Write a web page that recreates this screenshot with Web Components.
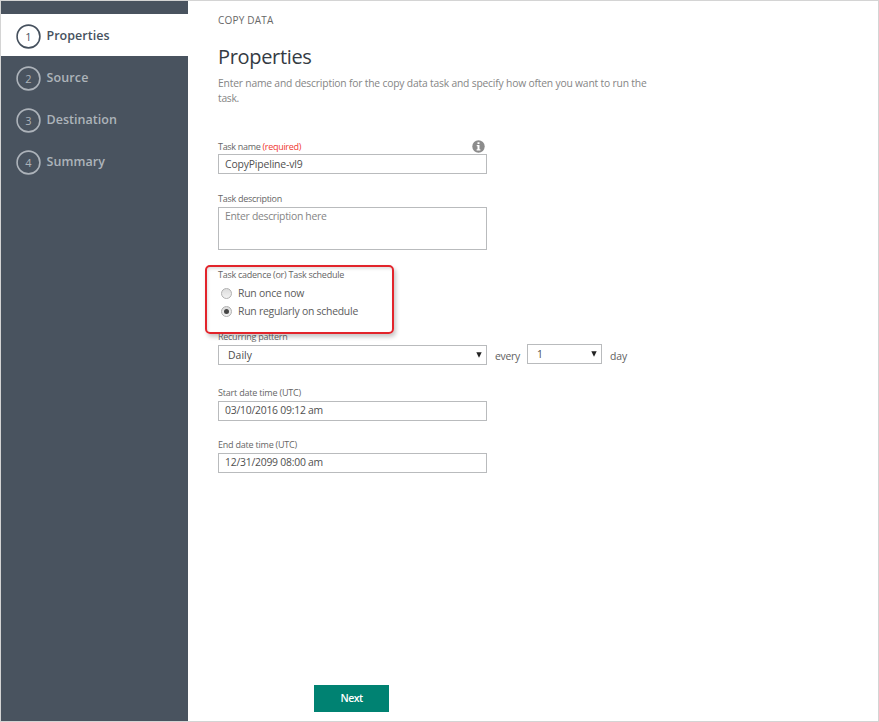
<!DOCTYPE html>
<html lang="en">
<head>
<meta charset="utf-8">
<title>Copy Data</title>
<style>
html, body { margin: 0; height: 100%; }
body { font-family: "Open Sans", "Noto Sans", sans-serif; background: #fff; overflow: hidden; }
</style>
</head>
<body>
<copy-wizard></copy-wizard>
<script>
const define = (name, html, after) => customElements.define(name, class extends HTMLElement {
  constructor() {
    super();
    this.attachShadow({ mode: 'open' }).innerHTML = html;
  }
  connectedCallback() { if (after) after(this, this.shadowRoot); }
});

/* One line of text, tracked so that it spans the width given in "w". */
define('fit-text', `<style>
  :host { display: block; flex: none; }
  span { display: block; width: max-content; white-space: pre; }
</style><span><slot></slot></span>`, (el, root) => {
  const span = root.querySelector('span');
  const extra = +el.getAttribute('w') - span.getBoundingClientRect().width;
  const spacing = extra / el.textContent.length;
  span.style.letterSpacing = spacing.toFixed(3) + 'px';
});

define('step-item', `
<style>
  :host { display: flex; align-items: center; box-sizing: border-box; height: 42px; padding: 3px 0 0 15px; gap: 5.5px; color: #adb3ba; }
  :host([active]) { background: #fff; color: #46515e; }
  svg { display: block; width: 25px; height: 25px; grid-area: 1 / 1; }
  i { display: grid; place-items: center; font: 400 11px/14px "Open Sans", sans-serif; }
  i span { grid-area: 1 / 1; }
  b { font-size: 12.5px; line-height: 18px; font-weight: 600; margin-top: -1px; }
</style><i><svg viewBox="0 0 25 25"><circle cx="12.5" cy="12.5" r="11.4" fill="none" stroke="currentColor" stroke-width="1.6"/></svg><span><slot name="num"></slot></span></i><b><slot></slot></b>`);

define('field-label', `
<style>:host { display: flex; justify-content: space-between; height: 14px; font-size: 9px; line-height: 14px; color: #666; }</style><slot></slot>`);

define('text-box', `
<style>
  :host { display: block; box-sizing: border-box; width: 269px; height: 20px; border: 1px solid #b9bbbd; background: #fff;
          padding-left: 6px; font-size: 10.4px; line-height: 16px; color: #505050; }
  :host([tall]) { line-height: 18px; }
  :host([multiline]) { height: 43px; color: #858585; }
</style><slot></slot>`);

define('select-box', `
<style>
  :host { display: flex; justify-content: space-between; align-items: center; box-sizing: border-box; width: 269px; height: 20px;
          border: 1px solid #b9bbbd; background: #fff; padding: 0 4px 0 9px; font-size: 10.4px; line-height: 18px; color: #4c4c4c; }
  :host([small]) { width: 75px; }
  svg { display: block; margin-top: -1px; }
</style><slot></slot><svg width="6" height="6" viewBox="0 0 6 6"><path d="M.3.3h5.4L3 5.8z" fill="#222"/></svg>`);

define('radio-option', `
<style>
  :host { display: flex; align-items: center; height: 18px; gap: 6px; padding-left: 3px; font-size: 10.4px; line-height: 18px; color: #5c5c5c; }
  i { box-sizing: border-box; width: 11px; height: 11px; border: 1px solid #b0b0b0; border-radius: 50%;
      background: linear-gradient(#dcdcdc, #f2f2f2); display: flex; align-items: center; justify-content: center; }
  :host([checked]) i::after { content: ""; width: 5px; height: 5px; border-radius: 50%; background: #454545; }
</style><i></i><slot></slot>`);

define('info-icon', `
<style>:host { display: block; width: 13px; height: 13px; }</style>
<svg width="13" height="13" viewBox="0 0 13 13" style="display:block"><circle cx="6.5" cy="6.5" r="6.2" fill="#8c8c8c"/>
<path d="M5.5 2.2h2v1.7h-2zM4.7 5h2.8v4.2h.9v1.2H4.6V9.2h.9v-3h-.8z" fill="#fff"/></svg>`);

define('next-button', `
<style>:host { display: flex; align-items: center; justify-content: center; width: 75px; height: 27px; background: #008272; color: #fff; font-size: 10.5px; font-weight: 600; line-height: 27px; }</style><slot></slot>`);

define('copy-wizard', `
<style>
  :host { display: flex; box-sizing: border-box; width: 879px; height: 722px; border: 1px solid #d4d4d4; background: #fff; }
  nav { width: 187px; background: #49535f; padding-top: 13px; box-sizing: border-box; }
  main { flex: 1; display: flex; flex-direction: column; align-items: flex-start; padding: 11px 0 0 30px; position: relative; }
  .crumb { font-size: 10px; line-height: 16px; height: 16px; color: #686868; }
  h1 { margin: 15px 0 0; font-size: 20px; line-height: 28px; height: 28px; font-weight: 400; color: #343b43; }
  .intro { margin-top: 5px; height: 30px; display: flex; flex-direction: column; font-size: 10.3px; line-height: 15px; color: #858585; }
  section { width: 269px; }
  .name { margin-top: 33px; }
  .name fit-text { margin-top: 1px; }
  .name text-box fit-text { margin-top: 0; }
  .name info-icon { margin: 1px 2px 0 0; }
  .name text-box { margin-top: 1px; }
  .desc { margin-top: 18px; }
  .desc text-box { margin-top: 1px; }
  .cadence { margin-top: 18px; }
  .cadence field-label { margin-bottom: 2px; }
  .pattern { margin-top: 10px; }
  .row { display: flex; width: 440px; height: 20px; font-size: 10.4px; line-height: 18px; color: #606060; margin-top: 1px; }
  .row > fit-text { margin: 2px 0 0 8px; }
  .row select-box[small] { margin: -1px 0 0 7px; }
  .start { margin-top: 21px; }
  .start text-box, .end text-box { margin-top: 1px; }
  .end { margin-top: 17px; }
  em { font-style: normal; color: #f03a32; }
  next-button { margin: 212px 0 0 96px; }
  .mark { position: absolute; left: 17px; top: 264px; width: 185px; height: 65px; border: 2px solid #e2242b; border-radius: 5px; box-shadow: 2px 3px 4px rgba(0,0,0,.22), inset 1px 2px 3px rgba(0,0,0,.12); }
</style>
<nav>
  <step-item active><span slot="num">1</span><fit-text w="63">Properties</fit-text></step-item>
  <step-item><span slot="num">2</span><fit-text w="42">Source</fit-text></step-item>
  <step-item><span slot="num">3</span><fit-text w="70.5">Destination</fit-text></step-item>
  <step-item><span slot="num">4</span><fit-text w="58.5">Summary</fit-text></step-item>
</nav>
<main>
  <div class="crumb"><fit-text w="55.5">COPY DATA</fit-text></div>
  <h1><fit-text w="93.5">Properties</fit-text></h1>
  <div class="intro"><fit-text w="428.5">Enter name and description for the copy data task and specify how often you want to run the</fit-text><fit-text w="21">task.</fit-text></div>
  <section class="name">
    <field-label><fit-text w="83">Task name <em>(required)</em></fit-text><info-icon></info-icon></field-label>
    <text-box tall><fit-text w="77.5">CopyPipeline-vl9</fit-text></text-box>
  </section>
  <section class="desc">
    <field-label><fit-text w="64">Task description</fit-text></field-label>
    <text-box multiline><fit-text w="101.5">Enter description here</fit-text></text-box>
  </section>
  <section class="cadence">
    <field-label><fit-text w="126">Task cadence (or) Task schedule</fit-text></field-label>
    <radio-option><fit-text w="66">Run once now</fit-text></radio-option>
    <radio-option checked><fit-text w="120">Run regularly on schedule</fit-text></radio-option>
  </section>
  <section class="pattern">
    <field-label><fit-text w="69.5">Recurring pattern</fit-text></field-label>
    <div class="row"><select-box><fit-text w="24">Daily</fit-text></select-box><fit-text w="25">every</fit-text><select-box small><fit-text w="6">1</fit-text></select-box><fit-text w="17">day</fit-text></div>
  </section>
  <section class="start">
    <field-label><fit-text w="83">Start date time (UTC)</fit-text></field-label>
    <text-box><fit-text w="98">03/10/2016 09:12 am</fit-text></text-box>
  </section>
  <section class="end">
    <field-label><fit-text w="79">End date time (UTC)</fit-text></field-label>
    <text-box><fit-text w="98">12/31/2099 08:00 am</fit-text></text-box>
  </section>
  <next-button><fit-text w="22">Next</fit-text></next-button>
  <div class="mark"></div>
</main>`);
</script>
</body>
</html>
